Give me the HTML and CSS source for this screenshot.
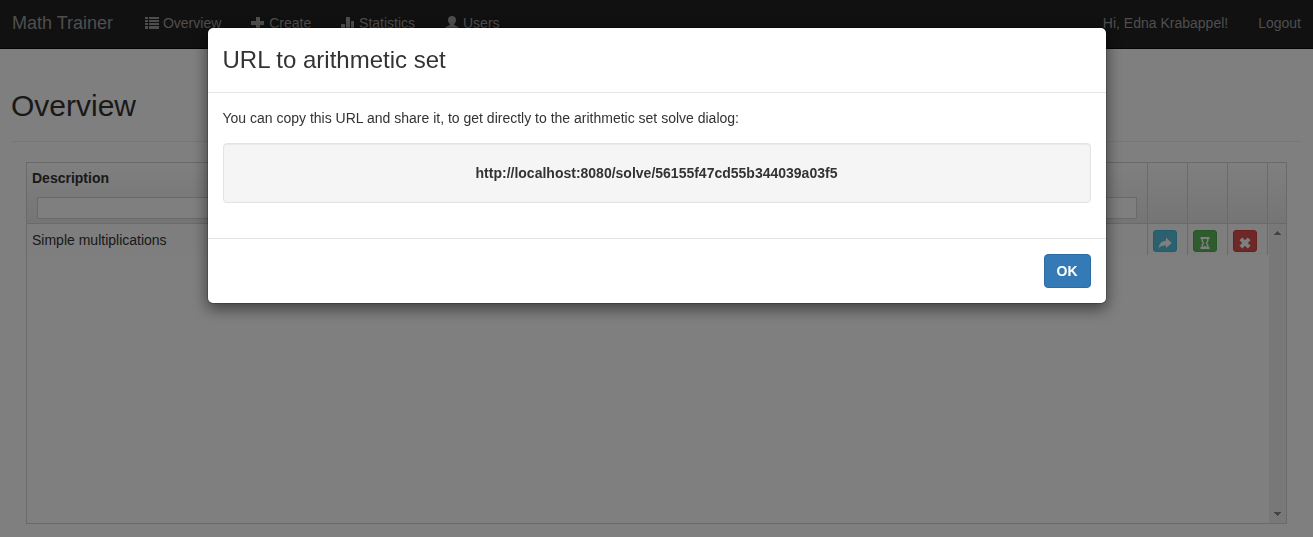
FILE: index.html
```html
<!DOCTYPE html>
<html lang="en">
<head>
<meta charset="utf-8">
<title>Math Trainer</title>
<link rel="stylesheet" href="styles.css">
</head>
<body>
<nav class="navbar">
  <a class="brand" href="#">Math Trainer</a>
  <div class="nav-links">
    <a class="nav-link" href="#"><svg class="icon" viewBox="0 0 14 14"><path d="M0 1h3v2H0zM4 1h10v2H4zM0 4h3v2H0zM4 4h10v2H4zM0 7h3v2H0zM4 7h10v2H4zM0 10h3v3H0zM4 10h10v3H4z"/></svg> Overview</a>
    <a class="nav-link" href="#"><svg class="icon" viewBox="0 0 14 14"><path d="M5 1h4v4h4v4H9v4H5V9H0V5h5z"/></svg> Create</a>
    <a class="nav-link" href="#"><svg class="icon" viewBox="0 0 14 14"><path d="M0 8.500l.5-.5h3l.5.500V13H0zM5 1.500l.5-.5h3l.5.500V13H5zM10 5.500l.5-.5h2l.5.500V13h-3z"/></svg> Statistics</a>
    <a class="nav-link" href="#"><svg class="icon" viewBox="0 0 14 14"><path d="M7 0C9.300 0 11 1.400 11 3.800c0 2-.8 3.400-1.800 4.200v.9l4 2q.8.500.8 1.300V13H0v-.8q0-.8.8-1.300l4-2V8C3.800 7.200 3 5.800 3 3.800 3 1.400 4.700 0 7 0z"/></svg> Users</a>
  </div>
  <div class="nav-links nav-right">
    <a class="nav-link" href="#">Hi, Edna Krabappel!</a>
    <a class="nav-link" href="#">Logout</a>
  </div>
</nav>

<main class="page">
  <header class="page-header"><h1 class="page-title">Overview</h1></header>
  <div class="grid">
    <table class="grid-table">
      <thead>
        <tr>
          <th class="head-cell head-open"><label for="filter-description">Description</label><input class="filter" id="filter-description" type="text"></th>
          <th class="head-cell"><input class="filter filter-unlabelled" type="text" aria-label="Filter"></th>
          <th class="head-cell col-action"></th>
          <th class="head-cell col-action"></th>
          <th class="head-cell col-action"></th>
          <th class="head-cell head-open col-scroll"></th>
        </tr>
      </thead>
      <tbody>
        <tr>
          <td class="cell cell-open">Simple multiplications</td>
          <td class="cell"></td>
          <td class="cell"><button class="btn-icon btn-info" type="button" aria-label="Share"><svg class="icon-small" viewBox="0 0 14 14"><path d="M8 1.500L13.800 7 8 12V9.500C4.500 9.300 2.300 10 .5 12.500 1 8 3.500 5 8 4.800z"/></svg></button></td>
          <td class="cell"><button class="btn-icon btn-success" type="button" aria-label="Solve"><svg class="icon-small" viewBox="0 0 14 14"><path fill-rule="evenodd" d="M2.500 1h9v2h-1v1.500c0 1.200-.7 2-1.700 2.500 1 .5 1.700 1.300 1.700 2.500V11h1v2h-9v-2h1V9.500c0-1.200.7-2 1.700-2.500-1-.5-1.700-1.300-1.700-2.500V3h-1zM5 3v1.500c0 1 1.200 1.500 1.200 2.500S5 8.500 5 9.500V11l2-1.500L9 11V9.500c0-1-1.200-1.500-1.200-2.500S9 5.500 9 4.500V3z"/></svg></button></td>
          <td class="cell"><button class="btn-icon btn-danger" type="button" aria-label="Delete"><svg class="icon-small" viewBox="0 0 14 14"><path d="M4.300 1.500L7 4.200l2.700-2.700 2.800 2.800L9.800 7l2.700 2.700-2.800 2.800L7 9.800l-2.700 2.700-2.800-2.800L4.200 7 1.500 4.300z"/></svg></button></td>
          <td class="cell cell-open"></td>
        </tr>
      </tbody>
    </table>
    <div class="scrollbar">
      <svg class="arrow" viewBox="0 0 7 4"><path d="M3 0h1v1h1v1h1v1h1v1H0V3h1V2h1V1h1z"/></svg>
      <svg class="arrow" viewBox="0 0 7 4"><path d="M0 0h7v1H6v1H5v1H4v1H3V3H2V2H1V1H0z"/></svg>
    </div>
  </div>
</main>

<div class="backdrop">
  <section class="modal" role="dialog" aria-modal="true" aria-labelledby="modal-title">
    <header class="modal-header"><h2 class="modal-title" id="modal-title">URL to arithmetic set</h2></header>
    <div class="modal-body">
      <p class="modal-text">You can copy this URL and share it, to get directly to the arithmetic set solve dialog:</p>
      <div class="well">http://localhost:8080/solve/56155f47cd55b344039a03f5</div>
    </div>
    <footer class="modal-footer"><button class="btn-primary" type="button">OK</button></footer>
  </section>
</div>
</body>
</html>
```

FILE: styles.css
```css
* { box-sizing: border-box; }

body {
  margin: 0;
  height: 100vh;
  overflow: hidden;
  background: #fff;
  color: #333;
  font: 14px/20px "Liberation Sans", Arial, sans-serif;
}

/* Navigation bar */
.navbar {
  display: flex;
  align-items: flex-start;
  height: 49px;
  padding: 0 12px;
  background: #222;
  border-bottom: 1px solid #080808;
}

.brand,
.nav-link {
  color: #9d9d9d;
  text-decoration: none;
  white-space: nowrap;
}

.brand {
  padding: 13px 17px 13px 0;
  font-size: 18px;
}

.nav-links { display: flex; }
.nav-link { padding: 13px 15px; }
.nav-right { margin-left: auto; }
.nav-right .nav-link:last-child { padding-right: 0; }

.icon {
  width: 14px;
  height: 14px;
  vertical-align: -2px;
  fill: currentColor;
}

/* Page heading */
.page { padding: 40px 11px 0; }

.page-header {
  padding-bottom: 19px;
  margin-bottom: 20px;
  border-bottom: 1px solid #eee;
}

.page-title {
  margin: 0;
  font-size: 30px;
  font-weight: 400;
  line-height: 33px;
}

/* Data grid */
.grid {
  position: relative;
  height: calc(100vh - 175px);
  margin: 0 15px;
  border: 1px solid #d4d4d4;
}

.grid-table {
  width: 100%;
  table-layout: fixed;
  border-spacing: 0;
}

.grid-table thead { background: linear-gradient(#fff, #eaeaea); }

.head-cell {
  height: 61px;
  padding: 5px 10px 4px;
  border-right: 1px solid #d4d4d4;
  border-bottom: 1px solid #d4d4d4;
  text-align: left;
  vertical-align: top;
}

.head-cell label {
  display: block;
  margin: 0 -5px 9px;
}

.col-action { width: 40px; }

.col-scroll {
  width: 18px;
  padding: 0;
}

.filter {
  display: block;
  width: 100%;
  height: 22px;
  padding: 0 4px;
  border: 1px solid #d4d4d4;
  background: #fff;
  font: inherit;
  font-weight: 400;
}

.filter-unlabelled { margin-top: 29px; }

.cell {
  height: 31px;
  padding: 6px 5px 0;
  border-right: 1px solid #d4d4d4;
  background: #fdfdfd;
  vertical-align: top;
}

.head-open,
.cell-open { border-right: 0; }

.btn-icon {
  display: flex;
  align-items: center;
  justify-content: center;
  width: 24px;
  height: 22px;
  padding: 4px 0 0;
  border: 1px solid;
  border-radius: 3px;
  color: #fff;
}

.icon-small {
  width: 14px;
  height: 14px;
  fill: currentColor;
}

.btn-info { background: #5bc0de; border-color: #46b8da; }
.btn-success { background: #5cb85c; border-color: #4cae4c; }
.btn-danger { background: #d9534f; border-color: #d43f3a; }

.scrollbar {
  position: absolute;
  top: 61px;
  right: 0;
  bottom: 0;
  display: flex;
  flex-direction: column;
  align-items: center;
  justify-content: space-between;
  width: 17px;
  padding: 7px 0;
  background: #f1f1f1;
}

.arrow {
  width: 7px;
  height: 4px;
  fill: #888;
}

/* Modal dialog */
.backdrop {
  position: fixed;
  inset: 0;
  padding: 27px 20px;
  background: rgba(0, 0, 0, .5);
}

.modal {
  max-width: 900px;
  margin: 0 auto;
  border: 1px solid rgba(0, 0, 0, .2);
  border-radius: 6px;
  background: #fff;
  background-clip: padding-box;
  box-shadow: 0 5px 15px rgba(0, 0, 0, .5);
}

.modal-header {
  padding: 15px;
  border-bottom: 1px solid #e5e5e5;
}

.modal-title {
  margin: 0;
  font-size: 24px;
  font-weight: 400;
  line-height: 34px;
}

.modal-body { padding: 15px 15px 35px; }
.modal-text { margin: 0 0 15px; }

.well {
  padding: 19px;
  border: 1px solid #e3e3e3;
  border-radius: 4px;
  background: #f5f5f5;
  box-shadow: inset 0 1px 1px rgba(0, 0, 0, .05);
  font-weight: 700;
  text-align: center;
  overflow-wrap: anywhere;
}

.modal-footer {
  padding: 15px;
  border-top: 1px solid #e5e5e5;
  text-align: right;
}

.btn-primary {
  padding: 6px 12px;
  border: 1px solid #2e6da4;
  border-radius: 4px;
  background: #337ab7;
  color: #fff;
  font: inherit;
  font-weight: 700;
  vertical-align: top;
}
```
